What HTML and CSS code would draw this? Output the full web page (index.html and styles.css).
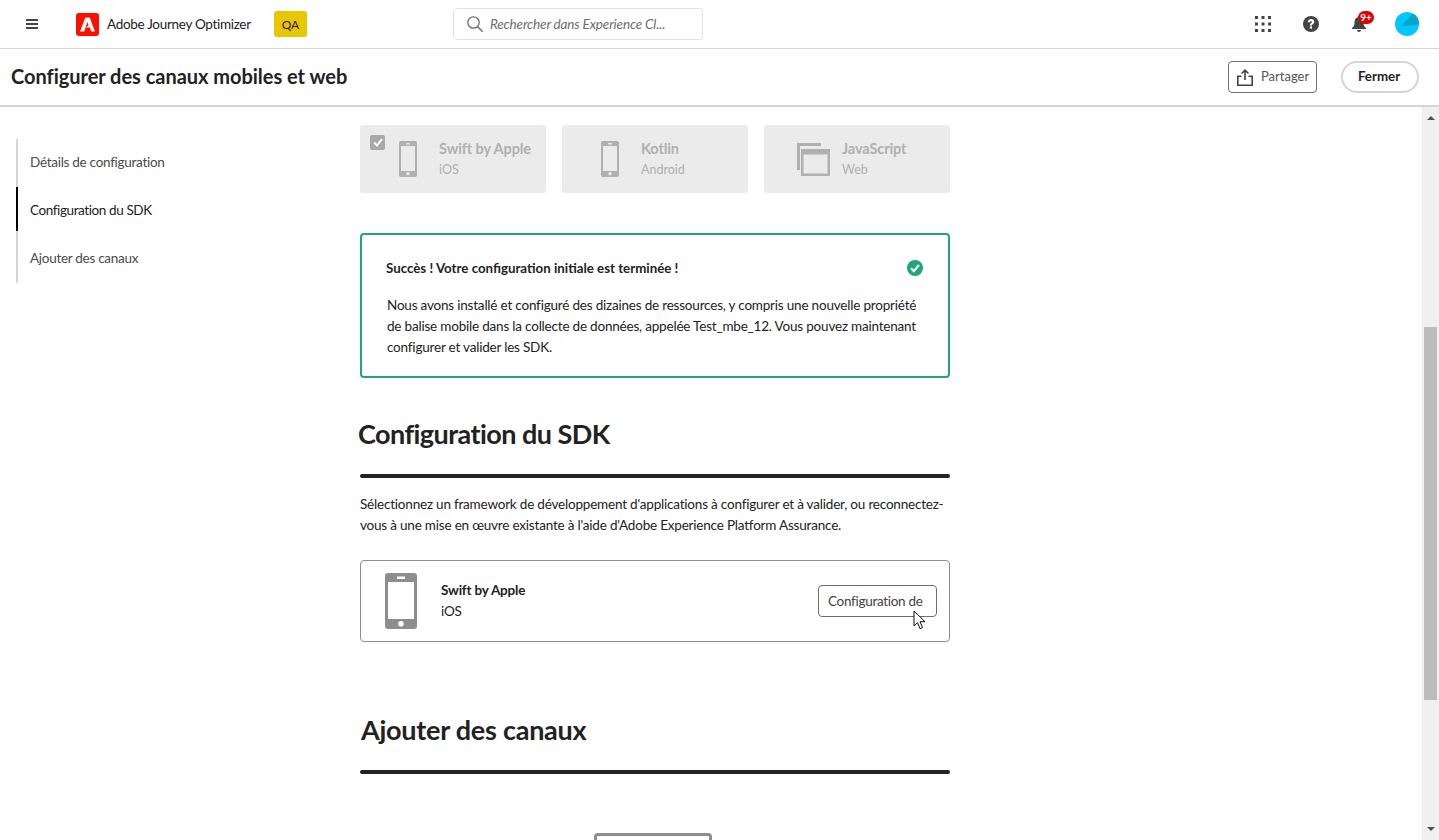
FILE: index.html
```html
<!DOCTYPE html>
<html lang="fr">
<head>
    <meta charset="UTF-8">
    <title>Configurer des canaux mobiles et web</title>
    <link rel="stylesheet" href="styles.css">
</head>
<body>
    <header class="topbar">
        <button class="menu-btn" aria-label="Menu">
            <svg width="14" height="12" viewBox="0 0 14 12"><path d="M1 1h12v2H1zM1 5h12v2H1zM1 9h12v2H1z" fill="#444"/></svg>
        </button>
        <svg class="adobe-logo" width="23" height="23" viewBox="0 0 23 23">
            <rect width="23" height="23" rx="3" fill="#fa0f00"/>
            <path d="M9.3 4.5h4.4L19 18.500h-3.700l-1.500-3.900h-3.900l2.700-2.400-1.200-3.300-3.200 9.600H4z" fill="#fff"/>
        </svg>
        <span class="app-name">Adobe Journey Optimizer</span>
        <span class="env-badge">QA</span>
        <div class="search">
            <svg width="18" height="18" viewBox="0 0 18 18"><circle cx="7.500" cy="7.500" r="5.700" fill="none" stroke="#6e6e6e" stroke-width="1.300"/><path d="M11.700 11.700l5 5" stroke="#6e6e6e" stroke-width="1.500"/></svg>
            <span>Rechercher dans Experience Cl...</span>
        </div>
        <div class="top-actions">
            <svg class="apps" width="16" height="16" viewBox="0 0 16 16" fill="#444">
                <rect x="0" y="0" width="3" height="3"/><rect x="6.500" y="0" width="3" height="3"/><rect x="13" y="0" width="3" height="3"/>
                <rect x="0" y="6.500" width="3" height="3"/><rect x="6.500" y="6.500" width="3" height="3"/><rect x="13" y="6.500" width="3" height="3"/>
                <rect x="0" y="13" width="3" height="3"/><rect x="6.500" y="13" width="3" height="3"/><rect x="13" y="13" width="3" height="3"/>
            </svg>
            <svg class="help" width="16" height="16" viewBox="0 0 16 16">
                <circle cx="8" cy="8" r="8" fill="#444"/>
                <path d="M4.800 6.200C4.900 4.200 6.300 3 8.100 3c1.900 0 3.200 1.200 3.200 2.800 0 1.300-.8 1.900-1.500 2.400-.6.400-.8.700-.8 1.300H6.800c0-1.200.4-1.800 1.100-2.300.6-.4.900-.7.900-1.200 0-.6-.3-.9-.8-.9-.6 0-.9.400-.9 1.100z" fill="#fff"/>
                <rect x="6.800" y="10.300" width="2.200" height="2.300" fill="#fff"/>
            </svg>
            <div class="bell">
                <svg width="16" height="18" viewBox="0 0 16 18"><path d="M8 1c-.8 0-1.200.5-1.200 1.200C4.400 2.800 3.500 4.800 3.500 7.500c0 2.700-.8 4-2.500 5.500v1h14v-1c-1.700-1.500-2.500-2.800-2.500-5.500 0-2.700-.9-4.700-3.300-5.300C9.200 1.500 8.800 1 8 1zM6 15c0 1.200.9 2 2 2s2-.8 2-2z" fill="#444"/></svg>
                <span class="bell-count">9+</span>
            </div>
            <svg class="avatar" width="24" height="24" viewBox="0 0 24 24">
                <circle cx="12" cy="12" r="12" fill="#00c8ff"/>
                <path d="M18 1.600A12 12 0 0 1 24 12.500L5.500 14.500z" fill="#0aa5c4"/>
            </svg>
        </div>
    </header>

    <div class="titlebar">
        <h1>Configurer des canaux mobiles et web</h1>
        <button class="share-btn">
            <svg width="16" height="17" viewBox="0 0 16 17"><path d="M8 0l4 4-1.100 1.100-2.100-2.100V11H7.200V3L5.100 5.100 4 4zM0 6.500h4.500V8H1.600v7.400h12.800V8h-2.900V6.500H16V17H0z" fill="#444"/></svg>
            <span class="share-label">Partager</span>
        </button>
        <button class="close-btn">Fermer</button>
    </div>

    <div class="workspace">
        <nav class="sidenav">
            <a href="#">Détails de configuration</a>
            <a href="#" class="active">Configuration du SDK</a>
            <a href="#" class="last">Ajouter des canaux</a>
        </nav>

        <main class="content">
            <div class="framework-row">
                <div class="framework">
                    <span class="checkbox">
                        <svg width="10" height="9" viewBox="0 0 10 9"><path d="M1 4.500l3 3 5-6.500" fill="none" stroke="#fff" stroke-width="2"/></svg>
                    </span>
                    <svg class="phone-sm" width="18" height="36" viewBox="0 0 18 36"><path d="M2 0h14a2 2 0 0 1 2 2v32a2 2 0 0 1-2 2H2a2 2 0 0 1-2-2V2a2 2 0 0 1 2-2zM2 5v25h14V5zM7 2v1.500h4V2zM9 31a1.700 1.700 0 1 0 0 3.400A1.700 1.700 0 0 0 9 31z" fill="#b0b0b0" fill-rule="evenodd"/></svg>
                    <div class="framework-text">
                        <strong>Swift by Apple</strong>
                        <span>iOS</span>
                    </div>
                </div>
                <div class="framework">
                    <svg class="phone-sm" width="18" height="36" viewBox="0 0 18 36"><path d="M2 0h14a2 2 0 0 1 2 2v32a2 2 0 0 1-2 2H2a2 2 0 0 1-2-2V2a2 2 0 0 1 2-2zM2 5v25h14V5zM7 2v1.500h4V2zM9 31a1.700 1.700 0 1 0 0 3.400A1.700 1.700 0 0 0 9 31z" fill="#b0b0b0" fill-rule="evenodd"/></svg>
                    <div class="framework-text">
                        <strong>Kotlin</strong>
                        <span>Android</span>
                    </div>
                </div>
                <div class="framework framework-web">
                    <svg class="web-icon" width="33" height="33" viewBox="0 0 33 33"><path d="M0 0h24v3H3v24H0zM4 6h29v27H4zM6.500 11.500V30.500h24V11.500z" fill="#b0b0b0" fill-rule="evenodd"/></svg>
                    <div class="framework-text">
                        <strong>JavaScript</strong>
                        <span>Web</span>
                    </div>
                </div>
            </div>

            <section class="success">
                <div class="success-head">
                    <strong>Succès ! Votre configuration initiale est terminée !</strong>
                    <svg width="16" height="16" viewBox="0 0 16 16"><circle cx="8" cy="8" r="8" fill="#1fa67a"/><path d="M4 8.200l2.800 2.900L12 5" fill="none" stroke="#fff" stroke-width="2.200"/></svg>
                </div>
                <p>Nous avons installé et configuré des dizaines de ressources, y compris une nouvelle propriété de balise mobile dans la collecte de données, appelée Test_mbe_12. Vous pouvez maintenant configurer et valider les SDK.</p>
            </section>

            <h2 class="section-title sdk-title">Configuration du SDK</h2>
            <div class="rule"></div>
            <p class="intro">Sélectionnez un framework de développement d'applications à configurer et à valider, ou reconnectez-vous à une mise en œuvre existante à l'aide d'Adobe Experience Platform Assurance.</p>

            <div class="sdk-card">
                <svg width="32" height="56" viewBox="0 0 32 56"><path d="M3 0h26a3 3 0 0 1 3 3v50a3 3 0 0 1-3 3H3a3 3 0 0 1-3-3V3a3 3 0 0 1 3-3zM3 9v37h26V9zM12 3.500v2.500h8V3.500zM16 48a2.800 2.800 0 1 0 0 5.600A2.800 2.800 0 0 0 16 48z" fill="#8e8e8e" fill-rule="evenodd"/></svg>
                <div class="sdk-text">
                    <strong>Swift by Apple</strong>
                    <span>iOS</span>
                </div>
                <button class="config-btn">Configuration de</button>
                <svg class="cursor" width="13" height="20" viewBox="0 0 13 20"><path d="M1 1v15l3.500-3.300 2.500 6 2.500-1-2.500-6H12z" fill="#fff" stroke="#111" stroke-width="1"/></svg>
            </div>

            <h2 class="section-title channels-title">Ajouter des canaux</h2>
            <div class="rule"></div>
            <div class="channel-box"></div>
        </main>

        <div class="scrollbar">
            <span class="arrow-up"></span>
            <div class="scroll-thumb"></div>
            <span class="arrow-down"></span>
        </div>
    </div>
</body>
</html>
```

FILE: styles.css
```css
* {
    box-sizing: border-box;
}

html, body {
    height: 100%;
}

body {
    margin: 0;
    height: 840px;
    overflow: hidden;
    display: flex;
    flex-direction: column;
    font-family: "Lato", "Noto Sans", sans-serif;
    font-size: 13.5px;
    letter-spacing: -0.2px;
    color: #222;
    background-color: #fff;
}

button {
    font-family: inherit;
    background: #fff;
    cursor: pointer;
}

/* barre du haut */
.topbar {
    height: 49px;
    flex: none;
    display: flex;
    align-items: center;
    border-bottom: 1px solid #d5d5d5;
}

.menu-btn {
    border: none;
    background: none;
    padding: 0;
    margin-left: 25px;
    width: 14px;
    height: 12px;
    display: flex;
}

.adobe-logo {
    margin-left: 37px;
}

.app-name {
    margin-left: 8px;
    letter-spacing: -0.3px;
    width: 159px;
}

.env-badge {
    width: 33px;
    height: 26px;
    margin-left: 8px;
    background-color: #e8c600;
    border-radius: 3px;
    font-size: 12px;
    letter-spacing: 0;
    display: flex;
    align-items: center;
    justify-content: center;
}

.search {
    width: 250px;
    height: 32px;
    margin-left: 146px;
    padding-left: 12px;
    border: 1px solid #e1e1e1;
    border-radius: 4px;
    display: flex;
    align-items: center;
    gap: 6px;
    font-style: italic;
    letter-spacing: -0.15px;
    color: #6e6e6e;
}

.top-actions {
    margin-left: auto;
    display: flex;
    align-items: center;
    padding-right: 20px;
}

.help {
    margin-left: 32px;
}

.bell {
    margin-left: 32px;
    position: relative;
    width: 16px;
    height: 18px;
}

.bell-count {
    position: absolute;
    top: -4px;
    left: 7px;
    width: 16px;
    height: 13px;
    border-radius: 7px;
    background-color: #e30000;
    color: #fff;
    font-size: 10px;
    font-weight: 700;
    letter-spacing: 0;
    text-align: center;
    line-height: 13px;
}

.avatar {
    margin-left: 28px;
}

/* titre */
.titlebar {
    height: 58px;
    flex: none;
    display: flex;
    align-items: center;
    padding: 0 20px 0 11px;
    border-bottom: 2px solid #d5d5d5;
}

h1 {
    margin: 0 auto 0 0;
    padding-bottom: 3px;
    font-size: 20px;
    font-weight: 700;
    letter-spacing: -0.03px;
}

.share-btn {
    width: 89px;
    height: 32px;
    border: 1px solid #707070;
    border-radius: 4px;
    display: flex;
    align-items: center;
    gap: 8px;
    padding: 0 0 0 8px;
    font-size: 13px;
    letter-spacing: 0;
    color: #555;
}

.share-label {
    padding-bottom: 2px;
}

.close-btn {
    width: 78px;
    height: 32px;
    margin-left: 24px;
    border: 2px solid #d5d5d5;
    border-radius: 16px;
    padding: 0 2px 2px 0;
    font-size: 13.3px;
    font-weight: 700;
    letter-spacing: 0;
    color: #222;
}

/* zone principale */
.workspace {
    flex: 1;
    min-height: 0;
    display: flex;
    overflow: hidden;
}

.sidenav {
    width: 360px;
    flex: none;
    padding: 32px 0 0 16px;
}

.sidenav a {
    display: flex;
    align-items: center;
    width: 240px;
    height: 48px;
    padding: 0 0 3px 12px;
    border-left: 2px solid #d5d5d5;
    color: #4b4b4b;
    letter-spacing: -0.28px;
    text-decoration: none;
}

.sidenav a.active {
    height: 44px;
    padding: 2px 0 0 12px;
    border-left-color: #000;
    color: #222;
    letter-spacing: -0.4px;
}

.sidenav a.last {
    height: 52px;
    padding: 2px 0 0 12px;
}

.content {
    width: 590px;
    flex: none;
    padding-top: 18px;
}

.framework-row {
    display: flex;
    gap: 16px;
}

.framework {
    position: relative;
    width: 186px;
    height: 68px;
    background-color: #ebebeb;
    border-radius: 3px;
    display: flex;
    align-items: center;
    padding-left: 39px;
    gap: 22px;
    color: #b0b0b0;
}

.framework-web {
    padding-left: 33px;
    gap: 12px;
}

.checkbox {
    position: absolute;
    left: 10px;
    top: 10px;
    width: 15px;
    height: 15px;
    background-color: #a8a8a8;
    border-radius: 2px;
    display: flex;
    align-items: center;
    justify-content: center;
}

.phone-sm {
    flex: none;
}

.framework-text {
    display: flex;
    flex-direction: column;
    gap: 1px;
    font-size: 12.5px;
    letter-spacing: 0;
}

.framework-text strong {
    font-size: 14.5px;
    letter-spacing: -0.1px;
    line-height: 20px;
}

.framework-text span {
    line-height: 19px;
}

.success {
    margin-top: 40px;
    height: 145px;
    border: 2px solid #1fa67a;
    border-radius: 4px;
    padding: 23px 25px 0 25px;
}

.success-head {
    display: flex;
    justify-content: space-between;
    align-items: center;
    height: 20px;
    margin-left: -1px;
    font-size: 13.3px;
    letter-spacing: 0;
}

.success p {
    margin: 17px 0 0;
    line-height: 21px;
}

.section-title {
    margin: 0;
    font-size: 27px;
    font-weight: 700;
    line-height: 36px;
}

.sdk-title {
    margin: 38px 0 0 -2px;
    letter-spacing: -0.55px;
}

.channels-title {
    margin: 70px 0 0 1px;
    letter-spacing: -0.25px;
}

.rule {
    height: 4px;
    margin-top: 22px;
    background-color: #222;
    border-radius: 2px;
}

.intro {
    margin: 16px 0 0;
    line-height: 21px;
}

.sdk-card {
    position: relative;
    height: 82px;
    margin-top: 24px;
    border: 1px solid #8e8e8e;
    border-radius: 4px;
    display: flex;
    align-items: center;
    padding: 0 12px 0 24px;
}

.sdk-text {
    display: flex;
    flex-direction: column;
    margin-left: 24px;
    line-height: 21px;
}

.config-btn {
    margin-left: auto;
    width: 119px;
    height: 32px;
    border: 1px solid #6e6e6e;
    border-radius: 4px;
    padding: 0 0 0 9px;
    text-align: left;
    font-size: 13.5px;
    letter-spacing: -0.3px;
    color: #444;
}

.cursor {
    position: absolute;
    left: 552px;
    top: 49px;
}

.channel-box {
    width: 118px;
    height: 40px;
    margin: 59px 0 0 234px;
    border: 3px solid #8e8e8e;
    border-radius: 4px;
}

/* barre de defilement */
.scrollbar {
    width: 17px;
    margin-left: auto;
    flex: none;
    background-color: #f0f0f0;
    position: relative;
}

.scroll-thumb {
    position: absolute;
    top: 220px;
    left: 2px;
    width: 13px;
    height: 373px;
    background-color: #bcbcbc;
}

.arrow-up,
.arrow-down {
    position: absolute;
    left: 5px;
    width: 0;
    height: 0;
    border-left: 4px solid transparent;
    border-right: 4px solid transparent;
}

.arrow-up {
    top: 9px;
    border-bottom: 4px solid #505050;
}

.arrow-down {
    bottom: 9px;
    border-top: 4px solid #505050;
}
```
